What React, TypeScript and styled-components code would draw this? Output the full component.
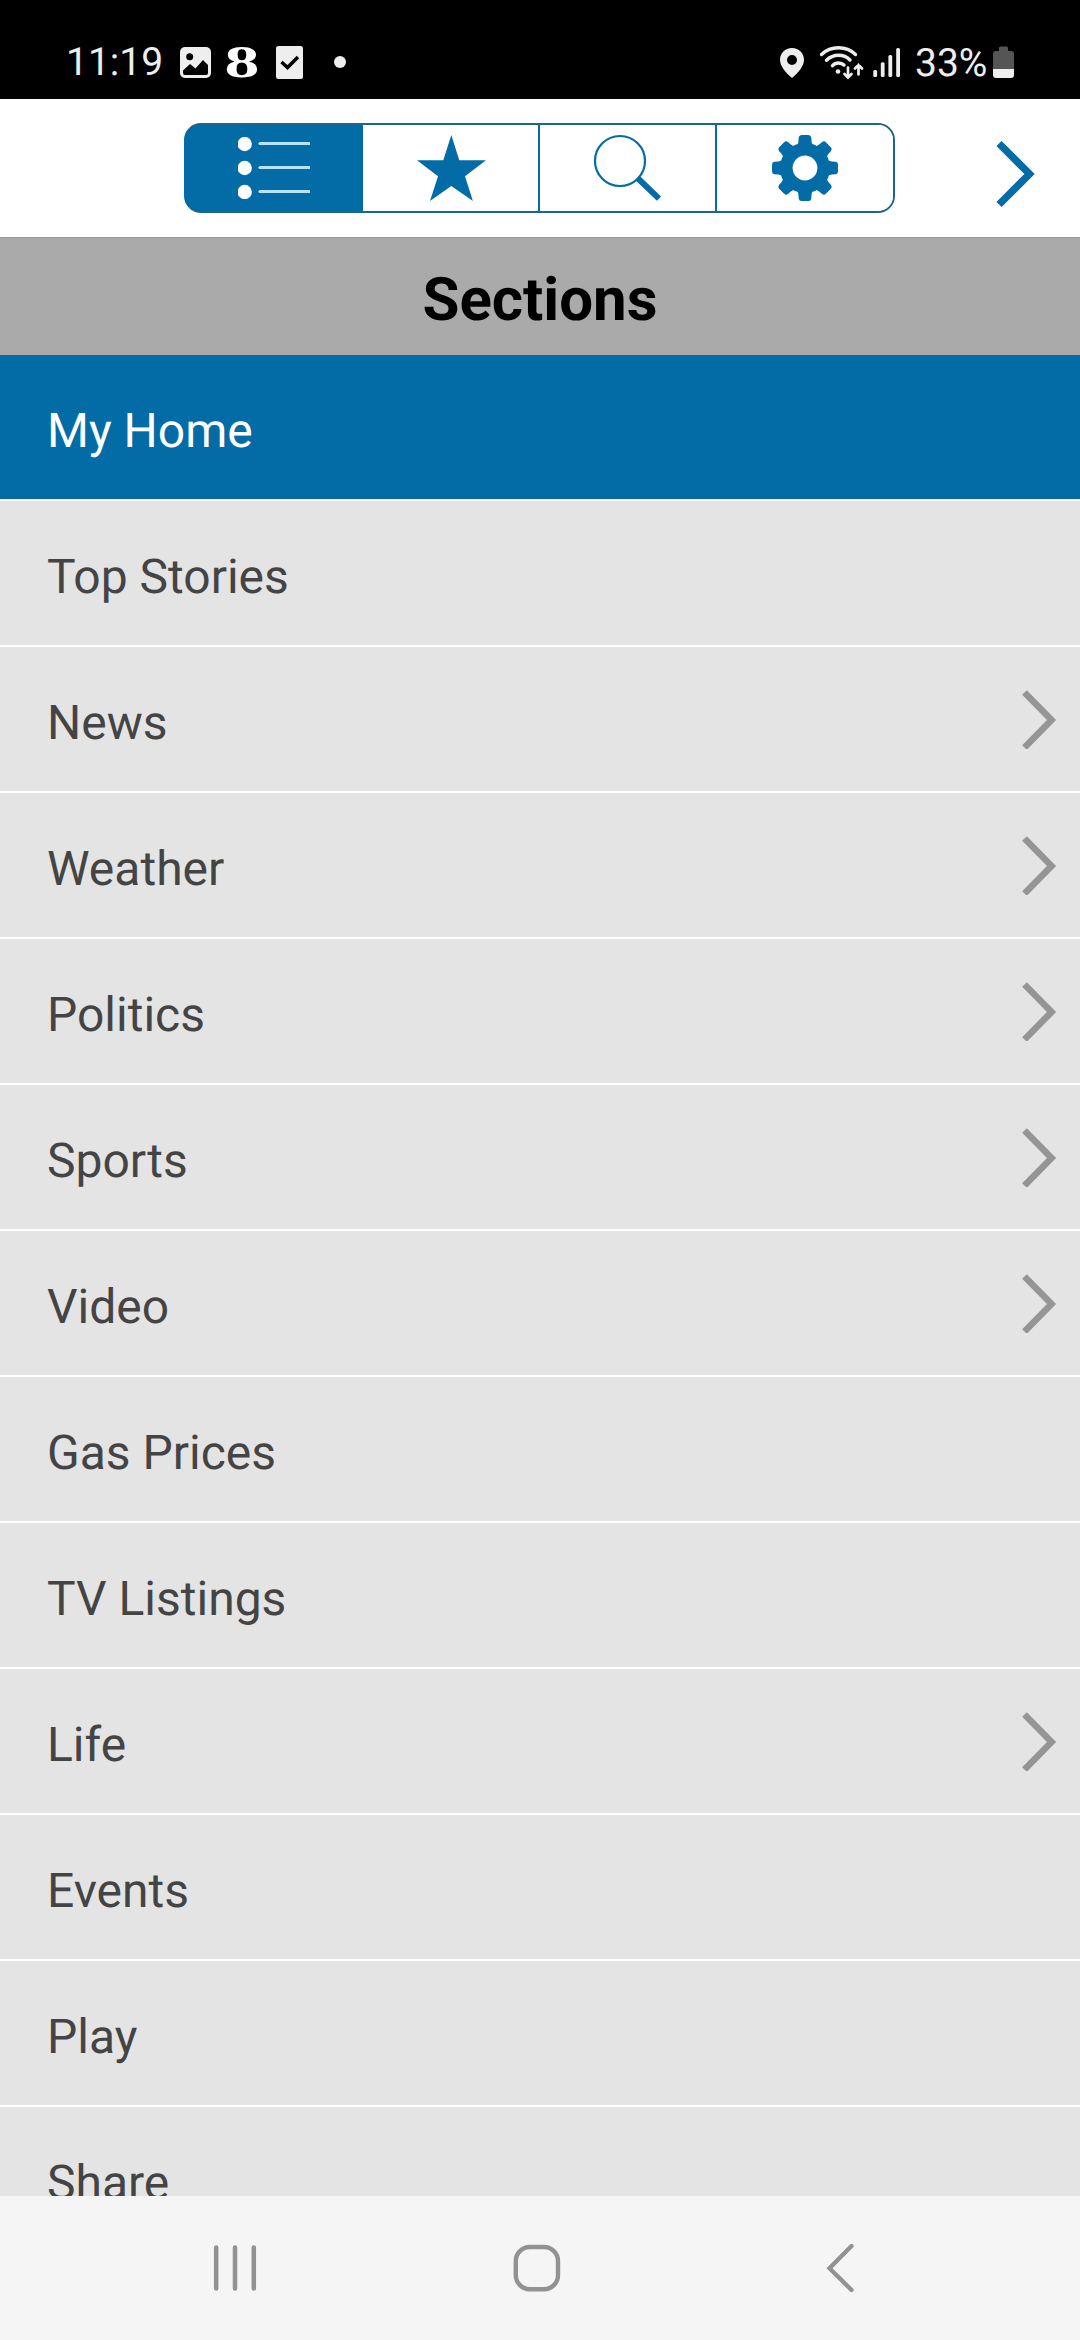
import React from "react";
import styled, { createGlobalStyle } from "styled-components";

const BLUE = "#036ba5";
const OUTLINE = "#1b6689";

const GlobalStyle = createGlobalStyle`
  body { margin: 0; font-family: Roboto, "Liberation Sans", sans-serif; text-rendering: geometricPrecision; }
  *, *::before, *::after { box-sizing: border-box; }
  svg { display: block; flex: none; }
`;

const Screen = styled.div`
  display: flex;
  flex-direction: column;
  width: 1080px;
  height: 2340px;
  overflow: hidden;
  background: #f5f5f5;
`;

const StatusBar = styled.header`
  flex: none;
  display: flex;
  justify-content: space-between;
  height: 99px;
  padding: 42px 65px 0 66px;
  background: #000;
  color: #eee;
`;

const StatusGroup = styled.div`
  display: flex;
  align-items: flex-start;
  height: 40px;
`;

const StatusText = styled.span<{ $width: number; $drop?: number; $gap?: number }>`
  width: ${(p) => p.$width}px;
  margin-left: ${(p) => p.$gap ?? 0}px;
  padding-top: ${(p) => p.$drop ?? 0}px;
  font-size: 39px;
  line-height: 40px;
  white-space: nowrap;
`;

const EightBadge = styled.span`
  width: 32px;
  margin: 0 17px 0 15px;
  color: #fff;
  font: bold 45px/40px "Liberation Serif", serif;
  text-align: center;
  transform: scaleX(1.55);
`;

const Toolbar = styled.div`
  flex: none;
  display: flex;
  height: 138px;
  padding: 24px 0 0 184px;
  background: #fff;
`;

const Segments = styled.div`
  display: grid;
  grid-template-columns: 177px 177px 177px 176px;
  width: 711px;
  height: 90px;
  border: 2px solid ${OUTLINE};
  border-left-color: ${BLUE};
  border-radius: 17px;
  background: linear-gradient(to right, ${BLUE} 177px, #fff 177px);
  overflow: hidden;
`;

const Segment = styled.button<{ $active?: boolean }>`
  display: flex;
  padding: 0;
  border: 0;
  border-right: 2px solid ${BLUE};
  background: ${(p) => (p.$active ? BLUE : "#fff")};
  &:last-child { border-right: 0; }
`;

const NextButton = styled.button`
  display: flex;
  margin: 14px 0 0 98px;
  width: 46px;
  height: 76px;
  padding: 0;
  border: 0;
  background: none;
`;

const SectionHeader = styled.h1`
  flex: none;
  display: flex;
  align-items: center;
  justify-content: center;
  height: 118px;
  margin: 0;
  padding-top: 7px;
  border-top: 1px solid #999;
  background: #aaa;
  color: #000;
  font-size: 60px;
  font-weight: 700;
  line-height: 70px;
`;

const Menu = styled.nav`
  flex: none;
  height: 1841px;
  overflow: hidden;
`;

const Row = styled.div<{ $active?: boolean }>`
  display: flex;
  align-items: center;
  justify-content: space-between;
  height: 146px;
  padding: 0 23px 0 47px;
  border-bottom: 2px solid #fff;
  background: ${(p) => (p.$active ? BLUE : "#e4e4e4")};
  color: ${(p) => (p.$active ? "#fff" : "#444")};
`;

const RowLabel = styled.span`
  padding-top: 7px;
  font-size: 48px;
  line-height: 56px;
`;

const NavBar = styled.footer`
  flex: none;
  display: grid;
  grid-template-columns: 213px 300px 313px 254px;
  height: 144px;
  padding-top: 48px;
  background: #f5f5f5;
`;

const NavButton = styled.div`
  grid-column-end: span 1;
  &:first-child { grid-column-start: 2; }
`;

const sections: { name: string; sub?: boolean }[] = [
  { name: "My Home" },
  { name: "Top Stories" },
  { name: "News", sub: true },
  { name: "Weather", sub: true },
  { name: "Politics", sub: true },
  { name: "Sports", sub: true },
  { name: "Video", sub: true },
  { name: "Gas Prices" },
  { name: "TV Listings" },
  { name: "Life", sub: true },
  { name: "Events" },
  { name: "Play" },
  { name: "Share" },
];

// Notification icons: picture, then (after the badge) checklist and overflow dot.
const PictureIcon = () => (
  <svg width="31" height="40" viewBox="180 42 31 40">
    <rect x="180" y="47" width="31" height="31" rx="5" fill="#eee" />
    <circle cx="189.7" cy="56.7" r="3.5" fill="#000" />
    <path d="M183 70.5L190 64L195.5 68.5L203 60L208 65V73Q208 75 206 75H185Q183 75 183 73Z" fill="#000" />
  </svg>
);

const ChecklistIcon = () => (
  <svg width="72" height="40" viewBox="275 42 72 40">
    <rect x="276" y="46" width="27" height="33" rx="2.5" fill="#eee" />
    <path d="M281.5 62L287.5 67.5L298 57" fill="none" stroke="#000" strokeWidth="3.5" />
    <circle cx="340" cy="62" r="6" fill="#eee" />
  </svg>
);

const SignalIcons = () => (
  <svg width="126" height="40" viewBox="778 42 126 40">
    <path
      fill="#eee"
      fillRule="evenodd"
      d="M792 48C785 48 780 53 780 60C780 66 786 73 792 78C798 73 804 66 804 60C804 53 799 48 792 48ZM792 55A5 5 0 1 1 792 65A5 5 0 1 1 792 55Z"
    />
    <g fill="none" stroke="#eee" strokeWidth="3.4" strokeLinecap="round">
      <path d="M821.500 54.500Q828.500 47.800 838.500 47.800Q848.500 47.800 855.500 54.500" />
      <path d="M826.500 60.300Q831.500 55.300 838.500 55.300Q845.500 55.300 850 60" />
      <path d="M832.500 65.700Q835 63 838.500 63Q842 63 844 65" />
      <path d="M848 67.500V77M844.500 74L848 77.500L851.500 74" strokeWidth="2.700" />
      <path d="M858.500 74.500V65M855 68.500L858.500 65L862 68.500" strokeWidth="2.700" />
    </g>
    <circle cx="838" cy="71.500" r="2.300" fill="#eee" />
    <g fill="#eee">
      <rect x="873.300" y="70" width="3.800" height="7" rx="1.500" />
      <rect x="880.800" y="62.300" width="3.800" height="14.700" rx="1.500" />
      <rect x="888.400" y="55" width="3.800" height="22" rx="1.500" />
      <rect x="896.200" y="48" width="3.800" height="29" rx="1.500" />
    </g>
  </svg>
);

const BatteryIcon = () => (
  <svg width="22" height="40" viewBox="993 42 22 40">
    <path d="M999 51V48Q999 46.500 1000.500 46.500H1006.500Q1008 46.500 1008 48V51H1011Q1014 51 1014 54V69H993V54Q993 51 996 51Z" fill="#555" />
    <path d="M993 69H1014V75Q1014 78 1011 78H996Q993 78 993 75Z" fill="#eee" />
  </svg>
);

const ListIcon = () => (
  <svg width="175" height="86" viewBox="186 125 175 86">
    <clipPath id="listEdge"><rect x="238" y="137" width="72" height="62" /></clipPath>
    <g clipPath="url(#listEdge)">
      {[144, 168, 192].map((y) => (
        <g key={y}>
          <circle cx="244.700" cy={y} r="7.200" fill="#fff" />
          <path d={`M260 ${y - 0.5}H312`} stroke="#b9e2f7" strokeWidth="3.200" strokeLinecap="round" />
        </g>
      ))}
    </g>
  </svg>
);

const StarIcon = () => (
  <svg width="175" height="86" viewBox="363 125 175 86">
    <path
      fill={BLUE}
      d="M451.300 135L459.300 160.300H486L465 176.200L472.900 201L451.300 186L430 201L438 176.200L417 160.300H443.300Z"
    />
  </svg>
);

const SearchIcon = () => (
  <svg width="175" height="86" viewBox="540 125 175 86">
    <circle cx="620" cy="161" r="25" fill="none" stroke={BLUE} strokeWidth="2.200" />
    <path d="M637.500 178L659 198.700" stroke={BLUE} strokeWidth="6" />
  </svg>
);

const GearIcon = () => (
  <svg width="176" height="86" viewBox="717 125 176 86">
    <g fill={BLUE}>
      <circle cx="805" cy="168" r="18.700" fill="none" stroke={BLUE} strokeWidth="12.600" />
      {[0, 45, 90, 135, 180, 225, 270, 315].map((a) => (
        <path
          key={a}
          d="M794 148Q798 146 798.500 141L798.700 137.500Q799 135 801.500 135H808.500Q811 135 811.300 137.500L811.500 141Q812 146 816 148Z"
          transform={`rotate(${a} 805 168)`}
        />
      ))}
    </g>
  </svg>
);

const RowChevron = () => (
  <svg width="36" height="60" viewBox="1021 689 36 60">
    <path d="M1024.500 692.500L1051.500 720L1024.500 747.500" fill="none" stroke="#959595" strokeWidth="6.600" />
  </svg>
);

export default function App() {
  return (
    <>
      <GlobalStyle />
      <Screen>
        <StatusBar>
          <StatusGroup>
            <StatusText $width={114}>11:19</StatusText>
            <PictureIcon />
            <EightBadge>8</EightBadge>
            <ChecklistIcon />
          </StatusGroup>
          <StatusGroup>
            <SignalIcons />
            <StatusText $width={78} $drop={1} $gap={11}>33%</StatusText>
            <BatteryIcon />
          </StatusGroup>
        </StatusBar>
        <Toolbar>
          <Segments>
            <Segment $active><ListIcon /></Segment>
            <Segment><StarIcon /></Segment>
            <Segment><SearchIcon /></Segment>
            <Segment><GearIcon /></Segment>
          </Segments>
          <NextButton>
            <svg width="46" height="76" viewBox="993 137 46 76">
              <path d="M999 143.500L1029.500 174L999 204.500" fill="none" stroke={BLUE} strokeWidth="7.300" />
            </svg>
          </NextButton>
        </Toolbar>
        <SectionHeader>Sections</SectionHeader>
        <Menu>
          {sections.map((s, i) => (
            <Row key={s.name} $active={i === 0}>
              <RowLabel>{s.name}</RowLabel>
              {s.sub && <RowChevron />}
            </Row>
          ))}
        </Menu>
        <NavBar>
          <NavButton>
            <svg width="46" height="48" viewBox="213 2244 46 48">
              <path d="M216.200 2247.500V2288.500M235 2247.500V2288.500M253.800 2247.500V2288.500" stroke="#929292" strokeWidth="4.500" strokeLinecap="round" />
            </svg>
          </NavButton>
          <NavButton>
            <svg width="48" height="48" viewBox="513 2244 48 48">
              <rect x="515.800" y="2247" width="42.200" height="42.200" rx="14" fill="none" stroke="#929292" strokeWidth="4.400" />
            </svg>
          </NavButton>
          <NavButton>
            <svg width="30" height="50" viewBox="826 2244 30 50">
              <path d="M851.500 2246L829.500 2268.200L851.500 2290" fill="none" stroke="#929292" strokeWidth="4.300" strokeLinecap="round" />
            </svg>
          </NavButton>
        </NavBar>
      </Screen>
    </>
  );
}
